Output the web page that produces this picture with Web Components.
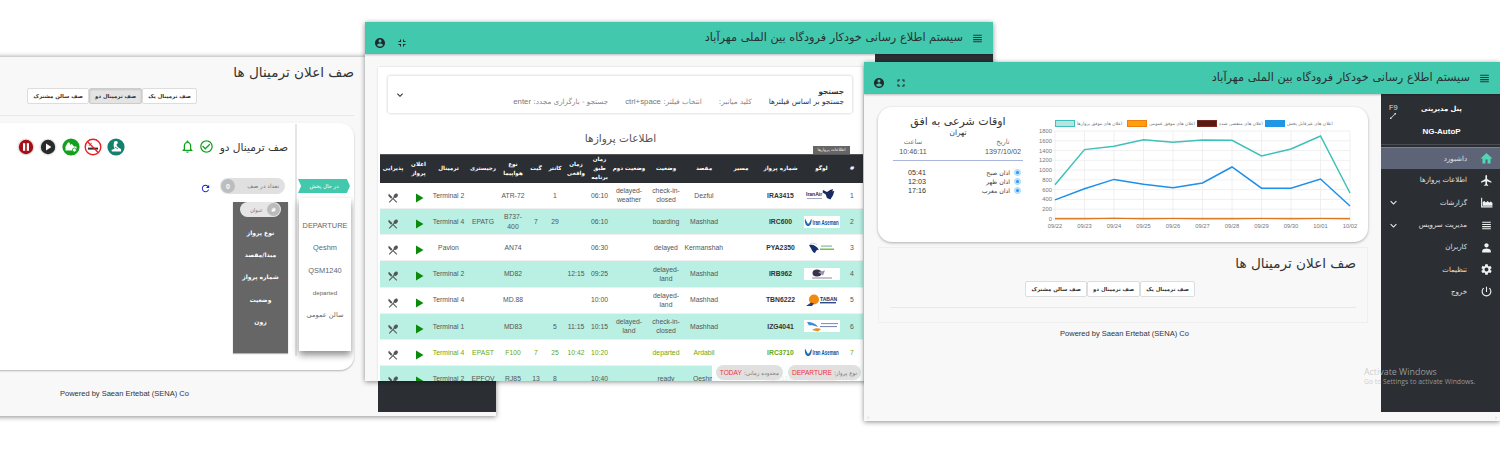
<!DOCTYPE html>
<html lang="fa">
<head>
<meta charset="utf-8">
<title>Sena AutoP</title>
<style>
    html, body { margin: 0; height: 451px; overflow: hidden; background: #fff; font-family: "DejaVu Sans", sans-serif; }
    body { width: 1500px; position: relative; }
    #winA { left: -40px; top: 56px; width: 536px; height: 360px; --side: 118px; --head: 0px; --foot: 4px; }
    #winB { left: 365px; top: 22px; width: 628px; height: 359px; --side: 118px; --head: 32px; --foot: 0px; }
    #winC { left: 864px; top: 62px; width: 636px; height: 359px; --side: 119px; --head: 32px; --foot: 9px; }
</style>
</head>
<body>
<sena-window id="winA">
    <queue-main slot="main"></queue-main>
</sena-window>

<sena-window id="winB">
    <top-bar slot="header" exit>سیستم اطلاع رسانی خودکار فرودگاه بین الملی مهرآباد</top-bar>
    <flights-main slot="main"></flights-main>
</sena-window>

<sena-window id="winC" scrollbar>
    <top-bar slot="header">سیستم اطلاع رسانی خودکار فرودگاه بین الملی مهرآباد</top-bar>
    <dashboard-main slot="main"></dashboard-main>
    <side-nav slot="side"></side-nav>
</sena-window>

<activate-note></activate-note>

<script>
const ICONS = {
    user: 'M12 2C6.48 2 2 6.48 2 12s4.48 10 10 10 10-4.48 10-10S17.52 2 12 2zm0 3c1.66 0 3 1.34 3 3s-1.34 3-3 3-3-1.34-3-3 1.34-3 3-3zm0 14.2c-2.5 0-4.71-1.28-6-3.22.03-1.99 4-3.08 6-3.08 1.99 0 5.97 1.09 6 3.08-1.29 1.94-3.5 3.22-6 3.22z',
    full: 'M7 14H5v5h5v-2H7v-3zm-2-4h2V7h3V5H5v5zm12 7h-3v2h5v-5h-2v3zM14 5v2h3v3h2V5h-5z',
    exit: 'M5 16h3v3h2v-5H5v2zm3-8H5v2h5V5H8v3zm6 11h2v-3h3v-2h-5v5zm2-11V5h-2v5h5V8h-3z',
    lines: 'M4 15h16v-2H4v2zm0 4h16v-2H4v2zm0-8h16V9H4v2zm0-6v2h16V5H4z',
    chevron: 'M16.59 8.59L12 13.17 7.41 8.59 6 10l6 6 6-6z',
    dining: 'M8.1 13.34l2.83-2.83L3.91 3.5c-1.56 1.56-1.56 4.09 0 5.66l4.19 4.18zm6.78-1.81c1.53.71 3.68.21 5.27-1.38 1.91-1.91 2.28-4.65.81-6.12-1.46-1.46-4.2-1.1-6.12.81-1.59 1.59-2.09 3.74-1.38 5.27L3.7 19.87l1.41 1.41L12 14.41l6.88 6.88 1.41-1.41L13.41 13l1.47-1.47z',
    play: 'M6 3v18l15-9z',
    home: 'M10 21v-7h4v7h5.5v-9H23L12 2 1 12h3.5v9z',
    flight: 'M21 16v-2l-8-5V3.5c0-.83-.67-1.5-1.5-1.5S10 2.67 10 3.5V9l-8 5v2l8-2.5V19l-2 1.5V22l3.5-1 3.5 1v-1.5L13 19v-5.5l8 2.5z',
    area: 'M2 3h2v16h19v2H2zM5 18v-7l3-2 3 3 3-3 3 3 3-2 3 3v5z',
    person: 'M12 12c2.21 0 4-1.79 4-4s-1.79-4-4-4-4 1.79-4 4 1.79 4 4 4zm0 2c-2.67 0-8 1.34-8 4v3h16v-3c0-2.66-5.33-4-8-4z',
    gear: 'M19.14 12.94c.04-.3.06-.61.06-.94 0-.32-.02-.64-.07-.94l2.03-1.58c.18-.14.23-.41.12-.61l-1.92-3.32c-.12-.22-.37-.29-.59-.22l-2.39.96c-.5-.38-1.03-.7-1.62-.94l-.36-2.54c-.04-.24-.24-.41-.48-.41h-3.84c-.24 0-.43.17-.47.41l-.36 2.54c-.59.24-1.13.57-1.62.94l-2.39-.96c-.22-.08-.47 0-.59.22L2.74 8.87c-.12.21-.08.47.12.61l2.03 1.58c-.05.3-.09.63-.09.94s.02.64.07.94l-2.03 1.58c-.18.14-.23.41-.12.61l1.92 3.32c.12.22.37.29.59.22l2.39-.96c.5.38 1.03.7 1.62.94l.36 2.54c.05.24.24.41.48.41h3.84c.24 0 .44-.17.47-.41l.36-2.54c.59-.24 1.13-.56 1.62-.94l2.39.96c.22.08.47 0 .59-.22l1.92-3.32c.12-.22.07-.47-.12-.61l-2.01-1.58zM12 15.6c-1.98 0-3.6-1.62-3.6-3.6s1.62-3.6 3.6-3.6 3.6 1.62 3.6 3.6-1.62 3.6-3.6 3.6z',
    power: 'M13 3h-2v10h2V3zm4.83 2.17l-1.42 1.42C17.99 7.86 19 9.81 19 12c0 3.87-3.13 7-7 7s-7-3.13-7-7c0-2.19 1.01-4.14 2.58-5.42L6.17 5.17C4.23 6.82 3 9.26 3 12c0 4.97 4.03 9 9 9s9-4.03 9-9c0-2.74-1.23-5.18-3.17-6.83z',
    refresh: 'M17.65 6.35C16.2 4.9 14.21 4 12 4c-4.42 0-7.99 3.58-7.99 8s3.57 8 7.99 8c3.73 0 6.84-2.55 7.73-6h-2.08c-.82 2.33-3.04 4-5.65 4-3.31 0-6-2.69-6-6s2.69-6 6-6c1.66 0 3.14.69 4.22 1.78L13 11h7V4l-2.35 2.35z',
    bell: 'M12 22c1.1 0 2-.9 2-2h-4c0 1.1.9 2 2 2zm6-6v-5c0-3.07-1.63-5.64-4.5-6.32V4c0-.83-.67-1.5-1.5-1.5s-1.5.67-1.5 1.5v.68C7.64 5.36 6 7.92 6 11v5l-2 2v1h16v-1l-2-2zm-2 1H8v-6c0-2.48 1.51-4.5 4-4.5s4 2.02 4 4.5v6z',
    check: 'M16.59 7.58L10 14.17l-3.59-3.58L5 12l5 5 8-8zM12 2C6.48 2 2 6.48 2 12s4.48 10 10 10 10-4.48 10-10S17.52 2 12 2zm0 18c-4.42 0-8-3.58-8-8s3.58-8 8-8 8 3.58 8 8-3.58 8-8 8z',
    expand: 'M21 3h-6l2.3 2.3L5.3 17.3 3 15v6h6l-2.3-2.3L18.7 6.7 21 9z'
};

function icon(name, size, color) {
    return `<svg width="${size}" height="${size}" viewBox="0 0 24 24" fill="${color}" style="display:block;flex:none"><path d="${ICONS[name]}"/></svg>`;
}

const LATIN = '"Liberation Sans", "DejaVu Sans", sans-serif';

class SenaWindow extends HTMLElement {
    constructor() {
        super();
        this.shadowDOM = this.attachShadow({mode: 'open'});
    }

    connectedCallback() {
        this.shadowDOM.innerHTML = `
        <style>
        :host {
            position: absolute;
            display: grid;
            grid-template-rows: var(--head) 1fr var(--foot);
            background: #f8f8f8;
            box-shadow: 0 1px 5px rgba(0,0,0,.45);
            overflow: hidden;
        }
        .head { display: grid; min-height: 0; z-index: 2; }
        .body {
            display: grid;
            grid-template-columns: 1fr var(--side);
            min-height: 0;
        }
        .main { min-width: 0; min-height: 0; overflow: hidden; }
        .side { background: #2b2e33; min-height: 0; overflow: hidden; }
        .foot {
            display: flex;
            justify-content: space-between;
            align-items: center;
            padding: 0 3px;
            color: #aaa;
            font-size: 5px;
            overflow: hidden;
        }
        </style>
        <div class="head"><slot name="header"></slot></div>
        <div class="body">
            <div class="main"><slot name="main"></slot></div>
            <div class="side"><slot name="side"></slot></div>
        </div>
        <div class="foot">${this.hasAttribute('scrollbar') ? '<span>‹</span><span>›</span>' : ''}</div>
        `;
    }
}
customElements.define('sena-window', SenaWindow);

class TopBar extends HTMLElement {
    constructor() {
        super();
        this.shadowDOM = this.attachShadow({mode: 'open'});
    }

    connectedCallback() {
        const second = this.hasAttribute('exit') ? 'exit' : 'full';
        this.shadowDOM.innerHTML = `
        <style>
        :host {
            display: flex;
            align-items: center;
            background: #42c9ad;
            box-shadow: 0 1px 2px rgba(0,0,0,.25);
            color: #2a2f33;
            padding: 0 9px 0 9px;
        }
        .left { display: flex; gap: 10px; align-items: center; padding-top: 10px; }
        .title {
            margin-left: auto;
            margin-right: 8px;
            font-size: 11.3px;
            padding-bottom: 1px;
            direction: rtl;
        }
        </style>
        <div class="left">${icon('user', 12, '#23282c')}${icon(second, 12, '#23282c')}</div>
        <div class="title"><slot></slot></div>
        ${icon('lines', 13, '#333')}
        `;
    }
}
customElements.define('top-bar', TopBar);

class NavItem extends HTMLElement {
    constructor() {
        super();
        this.shadowDOM = this.attachShadow({mode: 'open'});
    }

    connectedCallback() {
        const active = this.hasAttribute('active');
        this.shadowDOM.innerHTML = `
        <style>
        :host {
            display: flex;
            direction: rtl;
            align-items: center;
            height: 22.3px;
            padding-right: 4px;
            font-size: 7px;
            color: #e2e2e2;
            box-sizing: border-box;
        }
        :host([active]) { background: #5e6478; border-top: 1px solid #7b8090; }
        .i { width: 19px; display: flex; justify-content: center; margin-left: 10px; }
        .c { margin-right: auto; padding-left: 6px; display: flex; }
        </style>
        <div class="i">${icon(this.getAttribute('icon'), 13, active ? '#4fd6b2' : '#f1f1f1')}</div>
        <slot></slot>
        ${this.hasAttribute('chevron') ? `<div class="c">${icon('chevron', 13, '#e8e8e8')}</div>` : ''}
        `;
    }
}
customElements.define('nav-item', NavItem);

class SideNav extends HTMLElement {
    constructor() {
        super();
        this.shadowDOM = this.attachShadow({mode: 'open'});
    }

    connectedCallback() {
        this.shadowDOM.innerHTML = `
        <style>
        :host { display: block; color: #fff; }
        .brand {
            display: grid;
            grid-template-columns: 26px 1fr;
            height: 51px;
            box-sizing: border-box;
            border-bottom: 1px solid #4a4d52;
            margin-bottom: 2px;
        }
        .f9 {
            font: 7.5px "Liberation Sans", sans-serif;
            color: #ddd;
            padding: 10px 0 0 8px;
            line-height: 8px;
        }
        .names {
            display: flex;
            flex-direction: column;
            align-items: center;
            padding: 11px 24px 0 0;
            gap: 14px;
            font-weight: bold;
            font-size: 6.8px;
            line-height: 8px;
        }
        .names b { font: bold 8px "Liberation Sans", sans-serif; }
        </style>
        <div class="brand">
            <div class="f9">F9${icon('expand', 8, '#ddd')}</div>
            <div class="names"><span>پنل مدیریتی</span><b>NG-AutoP</b></div>
        </div>
        <nav-item icon="home" active>داشبورد</nav-item>
        <nav-item icon="flight">اطلاعات پروازها</nav-item>
        <nav-item icon="area" chevron>گزارشات</nav-item>
        <nav-item icon="lines" chevron>مدیریت سرویس</nav-item>
        <nav-item icon="person">کاربران</nav-item>
        <nav-item icon="gear">تنظیمات</nav-item>
        <nav-item icon="power">خروج</nav-item>
        `;
    }
}
customElements.define('side-nav', SideNav);

class QueueHeader extends HTMLElement {
    constructor() {
        super();
        this.shadowDOM = this.attachShadow({mode: 'open'});
    }

    connectedCallback() {
        const active = this.getAttribute('active');
        const names = ['صف ترمینال یک', 'صف ترمینال دو', 'صف سالن مشترک'];
        this.shadowDOM.innerHTML = `
        <style>
        :host { display: block; direction: rtl; box-sizing: border-box; }
        h3 {
            margin: 0;
            font-size: 13.6px;
            font-weight: normal;
            line-height: 22px;
            color: #333;
        }
        .group { display: flex; margin-top: var(--btn-gap, 7px); padding-right: var(--btn-end); }
        button {
            font: bold 5.4px "DejaVu Sans", sans-serif;
            height: 16px;
            padding: 0 5px;
            margin: 0;
            color: #333;
            background: #fff;
            border: 1px solid #ddd;
            border-radius: 2px;
            white-space: nowrap;
        }
        button.on { background: #e4e4e4; border-color: #ccc; box-shadow: inset 0 1px 2px rgba(0,0,0,.12); }
        hr { border: 0; border-top: 1px solid #e8e8e8; margin: var(--hr-gap, 10px) 0 0; }
        </style>
        <h3>صف اعلان ترمینال ها</h3>
        <div class="group">
            ${names.map((n, i) => `<button class="${String(i) === active ? 'on' : ''}">${n}</button>`).join('')}
        </div>
        <hr>
        `;
    }
}
customElements.define('queue-header', QueueHeader);

class StatusIcons extends HTMLElement {
    constructor() {
        super();
        this.shadowDOM = this.attachShadow({mode: 'open'});
    }

    connectedCallback() {
        this.shadowDOM.innerHTML = `
        <style>
        :host { display: flex; gap: 4.4px; direction: rtl; align-items: center; }
        svg { display: block; flex: none; }
        </style>
        <svg width="18" height="18" viewBox="0 0 18 18"><circle cx="9" cy="9" r="8.6" fill="#15806c"/>
            <path d="M7 3.500l3-.6 1 2.200-1.600 1.400 1.200 2.500 3.500 2.300v2.200H5l-.6-1.600 3.200-1.200-1-3z" fill="#fff"/><path d="M8 9l3 2" stroke="#15806c" stroke-width=".8"/></svg>
        <svg width="18" height="18" viewBox="0 0 18 18"><circle cx="9" cy="9" r="7.8" fill="#fff" stroke="#ee1c25" stroke-width="1.4"/>
            <rect x="4" y="9.600" width="10" height="2" fill="#333"/><path d="M5 8c.5-2 2-2 3-3" fill="none" stroke="#888" stroke-width="1"/><path d="M3.600 3.800l10.600 10.600" stroke="#ee1c25" stroke-width="1.4"/></svg>
        <svg width="18" height="18" viewBox="0 0 18 18"><circle cx="9" cy="9" r="8.6" fill="#12a01e"/>
            <path d="M3.500 12.500V8.600l2.500-4h1.400l1 2.400 1.300-1.200 2.300 2.600h2.500v2.400l-2 1.700z" fill="#fff"/><circle cx="12.400" cy="12" r="2" fill="#fff" stroke="#12a01e" stroke-width=".8"/></svg>
        <svg width="18" height="18" viewBox="0 0 18 18"><circle cx="9" cy="9" r="8.6" fill="#e7e7e7"/><circle cx="9" cy="9" r="7.2" fill="#2a2a2a"/><path d="M7 5.600v6.800l5.400-3.400z" fill="#fff"/></svg>
        <svg width="18" height="18" viewBox="0 0 18 18"><circle cx="9" cy="9" r="8.6" fill="#e3e3e3"/><circle cx="9" cy="9" r="7.2" fill="#a50e15"/><rect x="6" y="5.200" width="2.200" height="7.600" fill="#fff"/><rect x="9.800" y="5.200" width="2.200" height="7.600" fill="#fff"/></svg>
        `;
    }
}
customElements.define('status-icons', StatusIcons);

class NowPlaying extends HTMLElement {
    constructor() {
        super();
        this.shadowDOM = this.attachShadow({mode: 'open'});
    }

    connectedCallback() {
        this.shadowDOM.innerHTML = `
        <style>
        :host {
            display: block;
            flex: none;
            width: 59px;
            height: 232px;
            margin-top: 1px;
            border-left: 2px solid #e6e6e6;
            padding-top: 55px;
            box-sizing: border-box;
            padding-left: 1px;
        }
        .ribbon {
            width: 52px;
            height: 14px;
            background: #42c9ad;
            color: #fff;
            font-size: 5.4px;
            display: flex;
            align-items: center;
            justify-content: center;
            direction: rtl;
            clip-path: polygon(0 0, 94% 0, 100% 50%, 94% 100%, 0 100%, 6% 50%);
        }
        .box {
            width: 52px;
            height: 153px;
            margin: 5px 0 0 1px;
            background: #fff;
            box-shadow: 0 4px 7px rgba(0,0,0,.45);
            display: flex;
            flex-direction: column;
            align-items: center;
            padding-top: 22px;
            box-sizing: border-box;
            color: #666;
            font: 7.4px ${LATIN};
        }
        .box div { height: 22.4px; line-height: 11px; white-space: nowrap; }
        .box .fa { font-family: "DejaVu Sans", sans-serif; font-size: 6.6px; }
        .box .s { font-size: 6.2px; }
        </style>
        <div class="ribbon">در حال پخش</div>
        <div class="box">
            <div>DEPARTURE</div>
            <div>Qeshm</div>
            <div>QSM1240</div>
            <div class="s">departed</div>
            <div class="fa">سالن عمومی</div>
        </div>
        `;
    }
}
customElements.define('now-playing', NowPlaying);

class QueueColumn extends HTMLElement {
    constructor() {
        super();
        this.shadowDOM = this.attachShadow({mode: 'open'});
    }

    connectedCallback() {
        const rows = ['نوع پرواز', 'مبدا/مقصد', 'شماره پرواز', 'وضعیت', 'زون'];
        this.shadowDOM.innerHTML = `
        <style>
        :host {
            display: block;
            width: 55px;
            height: 151px;
            background: #666;
            color: #fff;
            direction: rtl;
            box-sizing: border-box;
            box-shadow: 0 1px 1px rgba(0,0,0,.3);
        }
        .pill {
            display: flex;
            align-items: center;
            gap: 4px;
            height: 15px;
            margin: 0 7px 0 7px;
            padding: 0 1px;
            background: #e6e6e6;
            border-radius: 8px;
            color: #777;
            font-size: 5.4px;
        }
        .pill b {
            width: 13px;
            height: 13px;
            border-radius: 50%;
            background: #bbb;
            color: #fff;
            display: flex;
            align-items: center;
            justify-content: center;
            font-size: 6px;
        }
        .row {
            height: 22.2px;
            line-height: 22px;
            text-align: center;
            font-size: 6px;
            font-weight: bold;
        }
        .rows { padding-top: 5px; }
        </style>
        <div class="pill"><b>#</b>عنوان</div>
        <div class="rows">${rows.map(r => `<div class="row">${r}</div>`).join('')}</div>
        `;
    }
}
customElements.define('queue-column', QueueColumn);

class QueueMain extends HTMLElement {
    constructor() {
        super();
        this.shadowDOM = this.attachShadow({mode: 'open'});
    }

    connectedCallback() {
        this.shadowDOM.innerHTML = `
        <style>
        :host {
            display: block;
            height: 100%;
            border-top: 1px solid #cfd2d4;
            box-sizing: border-box;
            padding: 4px 24px 0 14px;
            color: #333;
        }
        queue-header { --btn-end: 157px; --btn-gap: 5px; --hr-gap: 11px; }
        .card {
            display: flex;
            height: 247px;
            margin-top: 7px;
            background: #fff;
            border-radius: 14px;
            box-shadow: 0 1px 2px rgba(0,0,0,.28);
            overflow: hidden;
        }
        .left {
            flex: 1;
            direction: rtl;
            padding: 13px 7px 0 43px;
            min-width: 0;
        }
        .head { display: flex; justify-content: space-between; align-items: center; height: 21px; }
        .name { display: flex; align-items: center; gap: 4px; }
        .name span { font-size: 10.6px; color: #333; margin-left: 2px; }
        .count {
            display: flex;
            align-items: center;
            gap: 9px;
            height: 16px;
            margin-top: 21px;
            margin-right: 3px;
        }
        .count svg { margin-top: 4px; }
        .pill {
            display: flex;
            align-items: center;
            gap: 6px;
            width: 65px;
            height: 16px;
            box-sizing: border-box;
            padding: 0 6px 0 1px;
            background: #e0e0e0;
            border-radius: 8px;
            color: #777;
            font-size: 5.8px;
        }
        .pill b {
            width: 14px;
            height: 14px;
            margin-right: auto;
            border-radius: 50%;
            background: #bdbdbd;
            color: #fff;
            font: bold 7px ${LATIN};
            display: flex;
            align-items: center;
            justify-content: center;
        }
        queue-column { margin-top: 8px; }
        .foot {
            font: 7.5px/12px "Liberation Sans", sans-serif;
            color: #333;
            margin: 18px 0 0 86px;
            white-space: nowrap;
        }
        </style>
        <queue-header active="1"></queue-header>
        <div class="card">
            <div class="left">
                <div class="head">
                    <div class="name"><span>صف ترمینال دو</span>${icon('check', 15, '#13a21f')}${icon('bell', 15, '#13a21f')}</div>
                    <status-icons></status-icons>
                </div>
                <div class="count">
                    <div class="pill">تعداد در صف<b>0</b></div>
                    ${icon('refresh', 11, '#1420e6')}
                </div>
                <queue-column></queue-column>
            </div>
            <now-playing></now-playing>
        </div>
        <div class="foot">Powered by Saean Ertebat (SENA) Co</div>
        `;
    }
}
customElements.define('queue-main', QueueMain);

class SearchPanel extends HTMLElement {
    constructor() {
        super();
        this.shadowDOM = this.attachShadow({mode: 'open'});
    }

    connectedCallback() {
        this.shadowDOM.innerHTML = `
        <style>
        :host {
            display: flex;
            direction: rtl;
            align-items: center;
            height: 37px;
            background: #fff;
            box-shadow: 0 0 3px rgba(0,0,0,.25);
            border-radius: 2px;
            padding: 0 8px 0 6px;
            box-sizing: border-box;
        }
        .txt { flex: 1; font-size: 7.4px; line-height: 10px; color: #333; padding-top: 5px; }
        .t { font-weight: bold; font-size: 7.3px; }
        .hints { display: flex; gap: 17px; white-space: nowrap; }
        .g { color: #888; font-size: 7.2px; }
        .g i { font: normal 7.8px ${LATIN}; color: #777; }
        </style>
        <div class="txt">
            <div class="t">جستجو</div>
            <div class="hints">
                <span>جستجو بر اساس فیلترها</span>
                <span class="g">کلید میانبر:</span>
                <span class="g">انتخاب فیلتر: <i>ctrl+space</i></span>
                <span class="g">جستجو - بارگزاری مجدد: <i>enter</i></span>
            </div>
        </div>
        ${icon('chevron', 12, '#333')}
        `;
    }
}
customElements.define('search-panel', SearchPanel);

function airlineLogo(kind) {
    const box = (inner, white) => `<svg width="36" height="12" viewBox="0 0 36 12" style="display:block;margin:auto;direction:ltr">${white ? '<rect width="36" height="12" fill="#fff"/>' : ''}${inner}</svg>`;
    const sans = 'font-family="Liberation Sans, sans-serif" font-weight="bold"';
    if (kind === 'iranair') {
        return box(`<path d="M19 1l4 2 3-2 3-1-.6 2.600 2-.8-1.400 4.400-2.600 4.300-3.400-1.600-1.400-3.600-3-1.800z" fill="#1a2a5e"/><text x="2" y="7" ${sans} font-size="5" fill="#1a2a5e">IranAir</text><rect x="3" y="9" width="15" height=".8" fill="#8c93ad"/>`);
    }
    if (kind === 'aseman') {
        return box(`<path d="M1 2.500c-.7 5 1.300 7.500 3.200 7.500s4-2.500 3.300-7.500L5 7.500H3.600z" fill="#1b6cb5"/><text transform="translate(8.500 9) scale(1 1.500)" ${sans} font-size="4.400" fill="#11509c">Iran Aseman</text>`, true);
    }
    if (kind === 'pouya') {
        return box(`<path d="M5 3c4-1 8 1 10 5-3-1-3 2-4 3-2 0-3-3-6-8z" fill="#18306e"/><path d="M6 2c3-1.500 6-.5 7 1" stroke="#9ab" stroke-width=".5" fill="none"/><rect x="17" y="3.500" width="11" height="1.200" fill="#86b7a8"/><rect x="16" y="6.500" width="14" height="1.500" fill="#7dbf4e"/>`);
    }
    if (kind === 'raja') {
        return box(`<ellipse cx="13" cy="5" rx="4.500" ry="3.500" fill="#3a3350"/><path d="M14 4l7-1.500-2 5z" fill="#9a94a6"/><rect x="8" y="9.500" width="20" height="1" fill="#8a8a94"/>`, true);
    }
    if (kind === 'taban') {
        return box(`<circle cx="10" cy="5.500" r="5" fill="#f08a12"/><path d="M2 12l5-3.500 3 1-2 2.500z" fill="#26427c"/><text x="16" y="6.500" ${sans} font-size="5" fill="#1c2f63">TABAN</text><rect x="16" y="8" width="16" height="1.400" fill="#2c4a8c"/>`);
    }
    if (kind === 'zagros') {
        return box(`<path d="M3 2c5 0 9 1.500 11 5-4-1.500-7-2-9-1.500z" fill="#3c8fd0"/><path d="M8 10c3-2 6-2 9-1l-3 2.500z" fill="#e98a2b"/><rect x="17" y="3" width="17" height="1.100" fill="#5da5d8"/><rect x="16" y="6" width="17" height="1.100" fill="#7b8db5"/>`, true);
    }
    return box(`<rect x="4" y="3" width="28" height="5" fill="#d8323c"/>`);
}

const FLIGHTS = [
    {n: 1, logo: 'iranair', no: 'IRA3415', dest: 'Dezful', st: 'check-in-closed', st2: 'delayed-weather', plan: '06:10', real: '', cnt: '1', gate: '', type: 'ATR-72', reg: '', term: 'Terminal 2'},
    {n: 2, logo: 'aseman', no: 'IRC600', dest: 'Mashhad', st: 'boarding', st2: '', plan: '06:10', real: '', cnt: '29', gate: '7', type: 'B737-400', reg: 'EPATG', term: 'Terminal 4'},
    {n: 3, logo: 'pouya', no: 'PYA2350', dest: 'Kermanshah', st: 'delayed', st2: '', plan: '06:30', real: '', cnt: '', gate: '', type: 'AN74', reg: '', term: 'Pavion'},
    {n: 4, logo: 'raja', no: 'IRB962', dest: 'Mashhad', st: 'delayed-land', st2: '', plan: '09:25', real: '12:15', cnt: '', gate: '', type: 'MD82', reg: '', term: 'Terminal 2'},
    {n: 5, logo: 'taban', no: 'TBN6222', dest: 'Mashhad', st: 'delayed-land', st2: '', plan: '10:00', real: '', cnt: '', gate: '', type: 'MD.88', reg: '', term: 'Terminal 4'},
    {n: 6, logo: 'zagros', no: 'IZG4041', dest: 'Mashhad', st: 'check-in-closed', st2: 'delayed-land', plan: '10:15', real: '11:15', cnt: '5', gate: '', type: 'MD83', reg: '', term: 'Terminal 1'},
    {n: 7, logo: 'aseman', no: 'IRC3710', dest: 'Ardabil', st: 'departed', st2: '', plan: '10:20', real: '10:42', cnt: '25', gate: '7', type: 'F100', reg: 'EPAST', term: 'Terminal 4', done: true},
    {n: 8, logo: 'red', no: 'QSM1240', dest: 'Qeshm', st: 'ready', st2: '', plan: '10:40', real: '', cnt: '8', gate: '13', type: 'RJ85', reg: 'EPFOV', term: 'Terminal 2'}
];

class FlightTable extends HTMLElement {
    constructor() {
        super();
        this.shadowDOM = this.attachShadow({mode: 'open'});
    }

    connectedCallback() {
        const heads = ['#', 'لوگو', 'شماره پرواز', 'مسیر', 'مقصد', 'وضعیت', 'وضعیت دوم', 'زمان طبق برنامه', 'زمان واقعی', 'کانتر', 'گیت', 'نوع هواپیما', 'رجیستری', 'ترمینال', 'اعلان پرواز', 'پذیرایی'];
        const widths = [22, 39, 43, 36, 38, 38, 36, 23, 24, 18, 20, 26, 34, 35, 25, 26];
        const rows = FLIGHTS.map(f => `
            <tr class="${f.done ? 'done' : ''}">
                <td>${f.n}</td><td>${airlineLogo(f.logo)}</td><td class="no">${f.no}</td><td></td>
                <td>${f.dest}</td><td>${f.st}</td><td>${f.st2}</td><td>${f.plan}</td><td>${f.real}</td>
                <td>${f.cnt}</td><td>${f.gate}</td><td>${f.type}</td><td>${f.reg}</td><td>${f.term}</td>
                <td class="ic">${icon('play', 12, '#0b8a0b')}</td><td class="ic">${icon('dining', 12, '#555')}</td>
            </tr>`).join('');
        this.shadowDOM.innerHTML = `
        <style>
        :host { display: block; direction: rtl; }
        table {
            width: 483px;
            table-layout: fixed;
            border-collapse: collapse;
            font: 6.8px/9.3px ${LATIN};
            color: #555;
        }
        thead tr { height: 28px; background: #2b2e33; border-top: 1px solid #555; }
        th {
            color: #fff;
            font: bold 5.6px/9px "DejaVu Sans", sans-serif;
            padding: 0;
            overflow: hidden;
        }
        th > div { max-height: 27px; overflow: hidden; }
        tbody tr { height: 26.15px; background: #fff; border-bottom: 1px solid #f0f0f0; }
        tbody tr:nth-child(even) { background: #b9f0e3; }
        td { padding: 0; text-align: center; }
        td.no { color: #333; font-weight: bold; }
        td.ic { padding-top: 5px; }
        td.ic svg { margin: auto; }
        tr.done td { color: #69a90f; }
        </style>
        <table>
            <colgroup>${widths.map(w => `<col style="width:${w}px">`).join('')}</colgroup>
            <thead><tr>${heads.map(h => `<th><div>${h}</div></th>`).join('')}</tr></thead>
            <tbody>${rows}</tbody>
        </table>
        `;
    }
}
customElements.define('flight-table', FlightTable);

class FilterChips extends HTMLElement {
    constructor() {
        super();
        this.shadowDOM = this.attachShadow({mode: 'open'});
    }

    connectedCallback() {
        this.shadowDOM.innerHTML = `
        <style>
        :host {
            position: absolute;
            right: 0;
            bottom: 0;
            display: flex;
            direction: rtl;
            gap: 5px;
            height: 16px;
            padding: 0 2px 0 4px;
            background: rgba(255,255,255,.92);
            font-size: 5.6px;
            color: #777;
        }
        span {
            display: flex;
            align-items: center;
            gap: 2px;
            padding: 0 4px;
            height: 15px;
            background: #e0e0e0;
            border-radius: 8px;
            white-space: nowrap;
        }
        b { font: normal 6.6px ${LATIN}; color: #f0303a; }
        </style>
        <span>نوع پرواز: <b>DEPARTURE</b></span>
        <span>محدوده زمانی: <b>TODAY</b></span>
        `;
    }
}
customElements.define('filter-chips', FilterChips);

class FlightsMain extends HTMLElement {
    constructor() {
        super();
        this.shadowDOM = this.attachShadow({mode: 'open'});
    }

    connectedCallback() {
        this.shadowDOM.innerHTML = `
        <style>
        :host {
            display: block;
            height: 100%;
            box-sizing: border-box;
            padding: 13px 12px 0 13px;
        }
        .card {
            height: 100%;
            background: #fff;
            box-shadow: 0 0 2px rgba(0,0,0,.15);
            padding-top: 9px;
            box-sizing: border-box;
            overflow: hidden;
            position: relative;
            direction: rtl;
        }
        search-panel { margin: 0 11px 0 10px; }
        h4 {
            margin: 0;
            height: 41px;
            line-height: 50px;
            font-size: 10.6px;
            font-weight: normal;
            color: #555;
            text-align: center;
        }
        .tag {
            position: absolute;
            right: 13px;
            top: 79px;
            background: #666;
            color: #eee;
            font-size: 4.2px;
            line-height: 8px;
            width: 37px;
            text-align: center;
        }
        </style>
        <div class="card">
            <search-panel></search-panel>
            <h4>اطلاعات پروازها</h4>
            <div class="tag">اطلاعات پروازها</div>
            <flight-table></flight-table>
            <filter-chips></filter-chips>
        </div>
        `;
    }
}
customElements.define('flights-main', FlightsMain);

class PrayerTimes extends HTMLElement {
    constructor() {
        super();
        this.shadowDOM = this.attachShadow({mode: 'open'});
    }

    connectedCallback() {
        const times = [['اذان صبح', '05:41'], ['اذان ظهر', '12:03'], ['اذان مغرب', '17:16']];
        this.shadowDOM.innerHTML = `
        <style>
        :host {
            display: block;
            flex: none;
            width: 130px;
            direction: rtl;
            color: #444;
            text-align: center;
        }
        h4 { margin: 0; font-size: 11px; line-height: 14px; font-weight: normal; color: #333; }
        h5 { margin: 0; font-size: 7.4px; line-height: 8px; font-weight: normal; color: #333; }
        .two { display: flex; justify-content: space-between; font-size: 6.8px; line-height: 9.2px; margin-top: 1px; }
        .two div { display: flex; flex-direction: column; align-items: center; width: 40px; }
        .two span { color: #777; }
        .two i { font: normal 7.2px/9.2px ${LATIN}; color: #555; }
        .line { border-top: 1px solid #aab5dc; margin: 4px 0 6px; }
        .row { display: flex; align-items: center; height: 9.3px; font-size: 6.2px; color: #444; padding-right: 2px; }
        .dot { width: 7px; height: 7px; border-radius: 50%; background: #bfe3fa; border: 1px solid #aad8f6; box-sizing: border-box; display: flex; align-items: center; justify-content: center; margin-left: 4px; flex: none; }
        .dot::after { content: ""; width: 3px; height: 3px; border-radius: 50%; background: #2196f3; }
        .row i { font: normal 7.2px ${LATIN}; color: #333; margin-right: auto; margin-left: 15px; }
        </style>
        <h4>اوقات شرعی به افق</h4>
        <h5>تهران</h5>
        <div class="two">
            <div><span>تاریخ</span><i>1397/10/02</i></div>
            <div><span>ساعت</span><i>10:46:11</i></div>
        </div>
        <div class="line"></div>
        ${times.map(t => `<div class="row"><span class="dot"></span>${t[0]}<i>${t[1]}</i></div>`).join('')}
        `;
    }
}
customElements.define('prayer-times', PrayerTimes);

class LineChart extends HTMLElement {
    constructor() {
        super();
        this.shadowDOM = this.attachShadow({mode: 'open'});
    }

    connectedCallback() {
        const days = ['09/22', '09/23', '09/24', '09/25', '09/26', '09/27', '09/28', '09/29', '09/30', '10/01', '10/02'];
        const x0 = 17, step = 29.5, top = 0, h = 88;
        const px = i => x0 + i * step;
        const py = v => top + h - v / 1800 * h;
        const line = (vals, color, w) => `<polyline fill="none" stroke="${color}" stroke-width="${w}" points="${vals.map((v, i) => `${px(i)},${py(v).toFixed(1)}`).join(' ')}"/>`;
        let grid = '';
        for (let v = 0; v <= 1800; v += 200) {
            grid += `<line x1="${x0 - 2}" x2="${px(10)}" y1="${py(v)}" y2="${py(v)}" stroke="#ececec" stroke-width=".8"/>`;
            grid += `<text x="${x0 - 3}" y="${py(v) + 2}" text-anchor="end">${v}</text>`;
        }
        days.forEach((d, i) => {
            grid += `<line x1="${px(i)}" x2="${px(i)}" y1="${top}" y2="${top + h + 2}" stroke="#ececec" stroke-width=".8"/>`;
            grid += `<text x="${px(i)}" y="${top + h + 9}" text-anchor="middle">${d}</text>`;
        });
        const legend = [
            ['اعلان های موفق پروازها', '#b9e3e0', '#3fc0b8'],
            ['اعلان های موفق عمومی', '#ff9f0a', '#ee7d12'],
            ['اعلان های منقضی شده', '#5a1a14', '#7b2a20'],
            ['اعلان های غیرقابل پخش', '#1f96e6', '#1f96e6']
        ];
        this.shadowDOM.innerHTML = `
        <style>
        :host { display: block; flex: none; width: 330px; margin-top: 2px; }
        .legend {
            display: grid;
            grid-template-columns: 72px 70px 68px auto;
            height: 12px;
            padding-left: 17px;
        }
        .legend div { display: flex; align-items: center; gap: 2px; }
        .legend i { width: 20px; height: 7px; box-sizing: border-box; border: 1px solid; flex: none; }
        .legend span { font-size: 4.5px; color: #777; direction: rtl; white-space: nowrap; }
        svg { display: block; overflow: visible; margin-top: 2px; }
        text { font: 5.8px "Liberation Sans", sans-serif; fill: #777; }
        </style>
        <div class="legend">${legend.map(l => `<div><i style="background:${l[1]};border-color:${l[2]}"></i><span>${l[0]}</span></div>`).join('')}</div>
        <svg width="330" height="100" viewBox="0 0 330 100">
            ${grid}
            ${line([700, 1420, 1490, 1620, 1570, 1616, 1610, 1288, 1432, 1698, 532], '#3fc0b8', 1.5)}
            ${line([390, 620, 810, 710, 640, 736, 1064, 630, 630, 818, 266], '#1f8fe8', 1.5)}
            ${line([5, 5, 15, 5, 10, 5, 5, 10, 5, 10, 5], '#6b2015', .8)}
            ${line([15, 15, 15, 15, 15, 15, 15, 15, 15, 15, 15], '#ee7d12', 1)}
        </svg>
        `;
    }
}
customElements.define('line-chart', LineChart);

class DashboardMain extends HTMLElement {
    constructor() {
        super();
        this.shadowDOM = this.attachShadow({mode: 'open'});
    }

    connectedCallback() {
        this.shadowDOM.innerHTML = `
        <style>
        :host {
            display: block;
            height: 100%;
            box-sizing: border-box;
            padding: 13px 13px 0 14px;
            color: #333;
        }
        .card {
            display: flex;
            justify-content: space-between;
            height: 135px;
            padding: 8px 0 0 15px;
            box-sizing: border-box;
            background: #fff;
            border-radius: 14px;
            box-shadow: 0 1px 3px rgba(0,0,0,.3);
        }
        .queue {
            margin-top: 5px;
            height: 76px;
            padding: 4px 11px 0;
            box-sizing: border-box;
            border: 1px solid #efefef;
            --btn-end: 161px;
        }
        .foot {
            font: 7.5px/12px "Liberation Sans", sans-serif;
            text-align: center;
            margin-top: 5px;
            padding-left: 3px;
            color: #333;
        }
        </style>
        <div class="card">
            <prayer-times></prayer-times>
            <line-chart></line-chart>
        </div>
        <div class="queue"><queue-header></queue-header></div>
        <div class="foot">Powered by Saean Ertebat (SENA) Co</div>
        `;
    }
}
customElements.define('dashboard-main', DashboardMain);

class ActivateNote extends HTMLElement {
    constructor() {
        super();
        this.shadowDOM = this.attachShadow({mode: 'open'});
    }

    connectedCallback() {
        this.shadowDOM.innerHTML = `
        <style>
        :host {
            position: absolute;
            left: 1364px;
            top: 366px;
            color: rgba(190,190,190,.75);
            font: 8.9px/11px "Open Sans", sans-serif;
            white-space: nowrap;
            pointer-events: none;
        }
        small { display: block; font-size: 6.8px; line-height: 9px; }
        </style>
        Activate Windows
        <small>Go to Settings to activate Windows.</small>
        `;
    }
}
customElements.define('activate-note', ActivateNote);
</script>
</body>
</html>
